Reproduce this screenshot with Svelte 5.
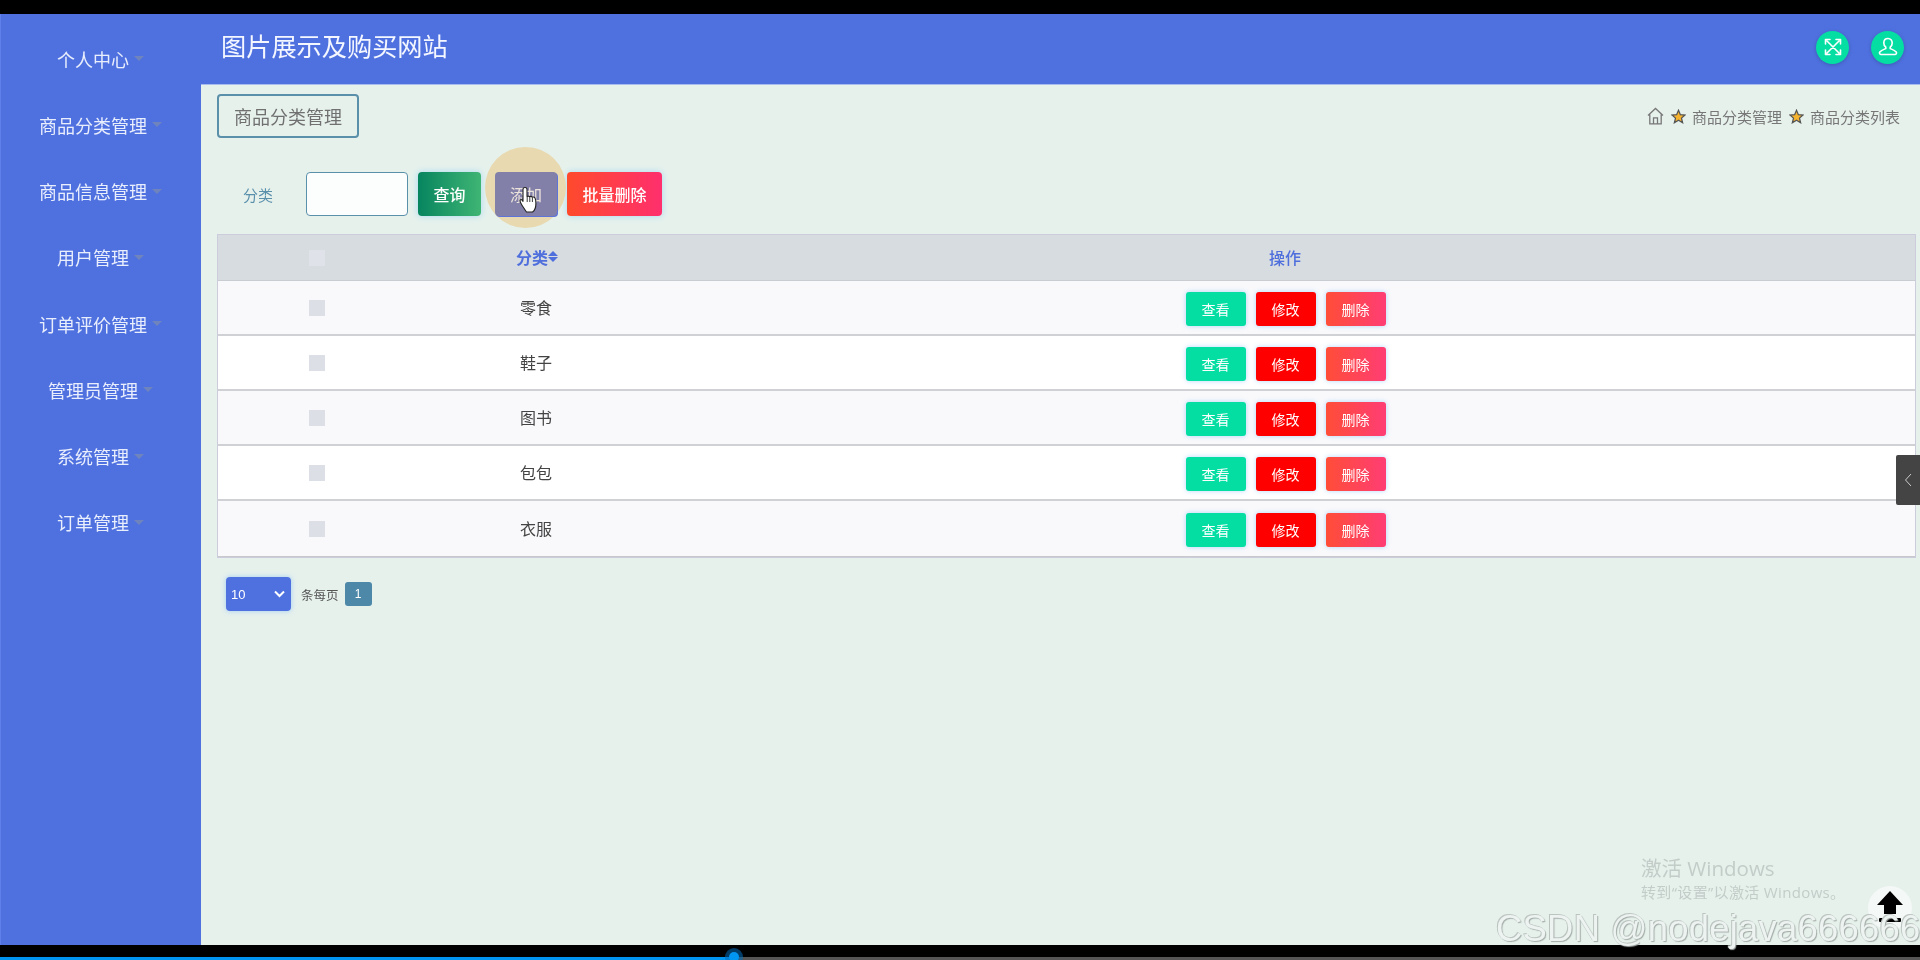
<script>
  const menus = ['个人中心', '商品分类管理', '商品信息管理', '用户管理', '订单评价管理', '管理员管理', '系统管理', '订单管理'];
  const rows = ['零食', '鞋子', '图书', '包包', '衣服'];
</script>

<div class="screen">
  <div class="bar-top"></div>
  <div class="main">
    <aside class="side">
      {#each menus as m}
        <div class="menu"><span>{m}</span><i class="caret"></i></div>
      {/each}
    </aside>
    <div class="right">
      <header class="head">
        <h1>图片展示及购买网站</h1>
        <div class="head-btns">
          <div class="round">
            <svg width="20" height="20" viewBox="0 0 20 20" fill="none" stroke="#fff" stroke-width="1.6" stroke-linecap="round" stroke-linejoin="round">
              <path d="M4 4l12 12M16 4L4 16M2.500 7V2.500H7M13 2.500h4.500V7M2.500 13v4.500H7M13 17.500h4.500V13" />
            </svg>
          </div>
          <div class="round">
            <svg width="22" height="22" viewBox="0 0 22 22" fill="none" stroke="#fff" stroke-width="1.600" stroke-linejoin="round">
              <path d="M11 2.500c-2.600 0-4.200 2-4.200 4.400 0 2 .9 3.400 2 4.300v1.300c-2 .9-4.500 1.800-6 3.600-.6.800-.3 2.400 1 2.400h14.400c1.300 0 1.600-1.600 1-2.400-1.500-1.800-4-2.700-6-3.600v-1.300c1.100-.9 2-2.300 2-4.300 0-2.400-1.600-4.400-4.200-4.400z" />
            </svg>
          </div>
        </div>
      </header>
      <main class="content">
        <div class="crumbs">
          <div class="tab">商品分类管理</div>
          <div class="path">
            <svg class="home" width="17" height="18" viewBox="0 0 17 18" fill="none" stroke="#777" stroke-width="1.300">
              <path d="M1 8.500L8.500 1.500 16 8.500M2.800 7.500V16.800h11.400V7.500M6.500 16.800v-6h4v6" />
            </svg>
            <svg class="star" width="15" height="15" viewBox="0 0 24 24"><path d="M12 2l3 7 7.500.7-5.700 4.900 1.800 7.400L12 18l-6.600 4 1.800-7.400L1.500 9.700 9 9z" fill="#f5b32e" stroke="#555" stroke-width="2"/></svg>
            <span>商品分类管理</span>
            <svg class="star" width="15" height="15" viewBox="0 0 24 24"><path d="M12 2l3 7 7.500.7-5.700 4.900 1.800 7.400L12 18l-6.600 4 1.800-7.400L1.500 9.700 9 9z" fill="#f5b32e" stroke="#555" stroke-width="2"/></svg>
            <span>商品分类列表</span>
          </div>
        </div>

        <div class="search">
          <label for="cat">分类</label>
          <input id="cat" />
          <button class="btn query">查询</button>
          <button class="btn add">添加</button>
          <button class="btn batch">批量删除</button>
        </div>

        <div class="table">
          <div class="tr th">
            <div class="c1"><i class="check"></i></div>
            <div class="c2 sortable">分类<span class="sort"><i></i><i></i></span></div>
            <div class="c3">操作</div>
          </div>
          {#each rows as r, i}
            <div class="tr" class:odd={i % 2 === 0}>
              <div class="c1"><i class="check"></i></div>
              <div class="c2">{r}</div>
              <div class="c3 ops">
                <button class="op view">查看</button>
                <button class="op edit">修改</button>
                <button class="op del">删除</button>
              </div>
            </div>
          {/each}
        </div>

        <div class="pager">
          <div class="size"><span>10</span>
            <svg width="11" height="8" viewBox="0 0 11 8" fill="none" stroke="#fff" stroke-width="2"><path d="M1 1.500l4.500 4.500L10 1.500" /></svg>
          </div>
          <span class="per">条每页</span>
          <span class="page">1</span>
        </div>
      </main>
    </div>
  </div>
  <div class="bar-bottom">
    <div class="progress"><div class="done"></div><div class="rest"></div></div>
    <div class="halo"><div class="dot"></div></div>
  </div>

  <!-- things laid over the page by the screen recording -->
  <div class="click-ring"></div>
  <svg class="hand" width="20" height="27" viewBox="0 0 20 27">
    <path d="M6 1.500c1.200 0 2 .8 2 2v7c.9-.5 2-.5 2.600.2.900-.5 2.100-.3 2.700.5 1-.4 2.200 0 2.700.9.700 1.200.9 3.200.9 5.400 0 4-1.700 7.400-3.300 8.500H7.500C6 24 4.700 21.800 3 19.200 2 17.600 1 15.800 1 14.800c0-1 1.200-1.500 2-.8l1 1.300V3.500c0-1.200.8-2 2-2z" fill="#fff" stroke="#222" stroke-width="1.100" stroke-linejoin="round"/>
    <path d="M8.200 11v5M10.800 11v5M13.400 11.500v4.500" stroke="#222" stroke-width=".9" fill="none"/>
  </svg>
  <div class="collapse">
    <svg width="8" height="14" viewBox="0 0 8 14" fill="none" stroke="#ccc" stroke-width="1"><path d="M7 1L1.500 7 7 13" /></svg>
  </div>
  <div class="activate">
    <div class="a1">激活 Windows</div>
    <div class="a2">转到“设置”以激活 Windows。</div>
  </div>
  <div class="to-top">
    <svg width="30" height="34" viewBox="0 0 30 34"><path d="M15 1L28 15H21V24H9V15H2z" fill="#000"/><rect x="4" y="28" width="22" height="4" rx="1" fill="#000"/></svg>
  </div>
  <div class="csdn">CSDN @nodejava666666</div>
</div>

<style>
  :global(body) { margin: 0; background: #000; }
  .screen {
    position: relative; width: 1920px; height: 960px; overflow: hidden;
    display: flex; flex-direction: column; background: #000;
    font-family: "Noto Sans CJK SC", "Noto Sans", sans-serif;
    filter: blur(0.35px);
  }
  .bar-top { height: 14px; flex: none; }
  .main { flex: 1; display: flex; min-height: 0; }
  .bar-bottom { height: 15px; flex: none; position: relative; }
  .progress { position: absolute; left: 0; right: 0; bottom: 0; height: 3px; display: flex; }
  .done { width: 734px; background: #0095f0; }
  .rest { flex: 1; background: #555; }
  .halo {
    position: absolute; left: 725px; top: 3px; width: 18px; height: 18px; border-radius: 50%;
    background: rgba(0, 110, 190, .55); display: flex; align-items: center; justify-content: center;
  }
  .dot { width: 10px; height: 10px; border-radius: 50%; background: #0095f0; }

  .side { width: 201px; flex: none; background: #4f71e0; padding: 11.500px 1px 0 0; box-sizing: border-box; border-left: 1px solid #5f80ea; }
  .menu { height: 66.250px; display: flex; align-items: center; justify-content: center; gap: 5px; color: #e9eefc; font-size: 18px; }
  .caret { width: 0; height: 0; border: 5px solid transparent; border-top: 5px solid #6f83bd; border-bottom: 0; }

  .right { flex: 1; display: flex; flex-direction: column; min-width: 0; }
  .head { height: 71px; flex: none; background: #4f71e0; display: flex; align-items: center; justify-content: space-between; padding: 0 16px 4px 20px; box-sizing: border-box; border-bottom: 1px solid #a9bdec; }
  h1 { margin: 0; font-size: 25.200px; line-height: 1; font-weight: 400; color: #f4f7ff; transform: translateY(-1px); }
  .head-btns { display: flex; gap: 22px; }
  .round { width: 33px; height: 33px; border-radius: 50%; background: #04dea3; display: flex; align-items: center; justify-content: center; box-shadow: 0 1px 4px rgba(0, 0, 0, .2); }

  .content { flex: 1; background: #e6f1ec; padding: 9px 4px 0 16px; min-height: 0; }
  .crumbs { display: flex; align-items: center; justify-content: space-between; }
  .tab { width: 142px; height: 44px; box-sizing: border-box; border: 2px solid #5b90ab; border-radius: 4px; display: flex; align-items: center; justify-content: center; font-size: 18px; color: #707070; }
  .path { display: flex; align-items: center; font-size: 15px; color: #777; padding-right: 16px; }
  .home { margin-right: 7px; }
  .star { margin-right: 6px; }
  .path span + .star { margin-left: 7px; }

  .search { display: flex; align-items: center; height: 44px; margin-top: 34px; position: relative; }
  label { width: 89px; padding-left: 26px; box-sizing: border-box; font-size: 15px; color: #5b90ab; }
  input { width: 102px; height: 44px; box-sizing: border-box; border: 1px solid #5b90ab; border-radius: 4px; background: #fcfdfd; margin: 0 10px 0 0; padding: 0; }
  .btn { height: 44px; border: 0; border-radius: 4px; color: #fff; font: 500 16px "Noto Sans CJK SC", sans-serif; padding: 0; box-shadow: 0 0 6px rgba(90, 190, 255, .45); }
  .query { width: 63px; background: linear-gradient(90deg, #07855f, #3fb574); margin-right: 14px; }
  .add { width: 62px; background: #8280a8; margin-right: 10px; position: relative; z-index: 2; color: #ece3dc; box-shadow: 1px 1px 0 #5f74d8; font-weight: 400; }
  .batch { width: 95px; background: linear-gradient(90deg, #ff4a2c, #ff2f6d); }

  .table { margin-top: 18px; border: 1px solid #ccd; box-sizing: border-box; }
  .tr { display: flex; align-items: center; height: 55px; background: #fff; border-bottom: 2px solid #d0d1d4; box-sizing: border-box; color: #444; font-size: 16px; }
  .tr:last-child { height: 56px; border-bottom: 1px solid #c8c9cc; }
  .tr.odd { background: #f9f9fb; }
  .th { height: 46px; background: #d7dce1; color: #4f6fdc; border-bottom: 1px solid #c9cdd2; font-weight: 500; }
  .c1 { width: 199px; display: flex; justify-content: center; flex: none; transform: translateX(-1px); }
  .c2 { width: 238px; flex: none; text-align: center; transform: translateY(-1px); }
  .c3 { flex: 1; text-align: center; }
  .th .c3 { transform: translateY(-1px); }
  .check { display: block; width: 16px; height: 16px; background: #dcdfe5; }
  .th .check { background: #dfe2e8; }
  .sortable { display: flex; justify-content: center; align-items: center; font-weight: 700; transform: translate(1px, -1px); }
  .sort { display: inline-flex; flex-direction: column; gap: 1px; }
  .sort i { width: 0; height: 0; border: 5px solid transparent; }
  .sort i:first-child { border-top: 0; border-bottom: 5px solid #4f6fdc; }
  .sort i:last-child { border-bottom: 0; border-top: 5px solid #4f6fdc; }
  .ops { display: flex; justify-content: center; gap: 10px; padding: 3px 0 0 1px; }
  .op { width: 60px; height: 34px; border: 0; padding: 0; border-radius: 3px; color: #fff; font: 400 14px "Noto Sans CJK SC", sans-serif; box-shadow: 0 0 5px rgba(90, 170, 255, .45); }
  .view { background: #04dea3; }
  .edit { background: #f00; }
  .del { background: linear-gradient(90deg, #ff4d38, #ff3d74); }

  .pager { display: flex; align-items: center; margin: 19px 0 0 9px; height: 34px; }
  .size { width: 65px; height: 34px; box-sizing: border-box; padding: 0 6px 0 5px; border-radius: 4px; background: #4f71e0; color: #fff; font: 13px "Liberation Sans", sans-serif; display: flex; align-items: center; justify-content: space-between; box-shadow: 0 0 5px rgba(90, 170, 255, .5); }
  .per { font-size: 12.500px; color: #555; margin: 0 6px 0 10px; }
  .page { width: 27px; height: 24px; border-radius: 3px; background: #4d88a8; color: #fff; font: 12px "Liberation Sans", sans-serif; display: flex; align-items: center; justify-content: center; }

  .click-ring { position: absolute; left: 485px; top: 147px; width: 81px; height: 81px; border-radius: 50%; background: #e8d9b0; z-index: 0; }
  .hand { position: absolute; left: 519px; top: 186px; z-index: 3; }
  .collapse { position: absolute; left: 1896px; top: 455px; width: 24px; height: 50px; background: #444; border-radius: 2px 0 0 2px; display: flex; align-items: center; justify-content: center; }
  .activate { position: absolute; left: 1641px; top: 854px; color: #c3ccc8; }
  .a1 { font: 20.500px/28px "Open Sans", "Noto Sans CJK SC", sans-serif; }
  .a2 { font: 15px/20px "Open Sans", "Noto Sans CJK SC", sans-serif; letter-spacing: .35px; }
  .to-top { position: absolute; left: 1868px; top: 886px; width: 44px; height: 44px; border-radius: 50%; background: #f4f8f6; display: flex; justify-content: center; padding-top: 4px; box-sizing: border-box; }
  .csdn { position: absolute; left: 1496px; top: 908px; font: 36.500px/42px "Liberation Sans", sans-serif; letter-spacing: .2px; color: #edf3f0; text-shadow: 1px 1px 1px #a3aba7, -1px -1px 0 #bcc4c0; white-space: nowrap; }
</style>
